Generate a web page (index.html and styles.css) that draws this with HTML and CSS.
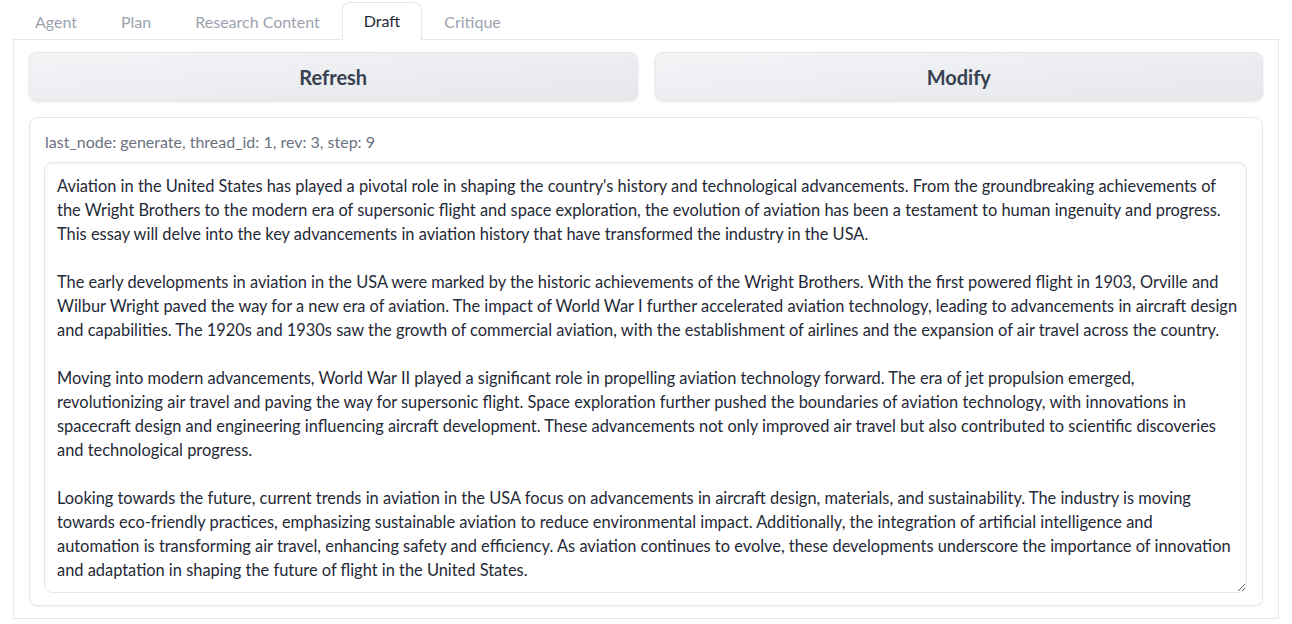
FILE: index.html
```html
<!DOCTYPE html>
<html>
<head>
<meta charset="utf-8">
<link rel="stylesheet" href="styles.css">
</head>
<body>
<div class="tabs">
  <div class="tab-bar">
    <button class="tab">Agent</button>
    <button class="tab">Plan</button>
    <button class="tab">Research Content</button>
    <button class="tab selected">Draft</button>
    <button class="tab">Critique</button>
  </div>
  <div class="panel">
    <div class="actions">
      <button class="btn">Refresh</button>
      <button class="btn">Modify</button>
    </div>
    <div class="block">
      <label class="label">last_node: generate, thread_id: 1, rev: 3, step: 9</label>
      <textarea class="draft" wrap="off">Aviation in the United States has played a pivotal role in shaping the country's history and technological advancements. From the groundbreaking achievements of
the Wright Brothers to the modern era of supersonic flight and space exploration, the evolution of aviation has been a testament to human ingenuity and progress.
This essay will delve into the key advancements in aviation history that have transformed the industry in the USA.

The early developments in aviation in the USA were marked by the historic achievements of the Wright Brothers. With the first powered flight in 1903, Orville and
Wilbur Wright paved the way for a new era of aviation. The impact of World War I further accelerated aviation technology, leading to advancements in aircraft design
and capabilities. The 1920s and 1930s saw the growth of commercial aviation, with the establishment of airlines and the expansion of air travel across the country.

Moving into modern advancements, World War II played a significant role in propelling aviation technology forward. The era of jet propulsion emerged,
revolutionizing air travel and paving the way for supersonic flight. Space exploration further pushed the boundaries of aviation technology, with innovations in
spacecraft design and engineering influencing aircraft development. These advancements not only improved air travel but also contributed to scientific discoveries
and technological progress.

Looking towards the future, current trends in aviation in the USA focus on advancements in aircraft design, materials, and sustainability. The industry is moving
towards eco-friendly practices, emphasizing sustainable aviation to reduce environmental impact. Additionally, the integration of artificial intelligence and
automation is transforming air travel, enhancing safety and efficiency. As aviation continues to evolve, these developments underscore the importance of innovation
and adaptation in shaping the future of flight in the United States.</textarea>
    </div>
  </div>
</div>
</body>
</html>
```

FILE: styles.css
```css
html, body {
  margin: 0;
  padding: 0;
  background: #ffffff;
}

body {
  font-family: Lato, "Noto Sans", sans-serif;
  color: #1f2937;
  padding: 0 13px;
}

.tabs {
  display: flex;
  flex-direction: column;
}

.tab-bar {
  display: flex;
  align-items: flex-end;
  height: 40px;
  border-bottom: 1px solid #e5e7eb;
  box-sizing: border-box;
}

.tab {
  font-family: inherit;
  font-size: 16px;
  color: #9ca3af;
  background: transparent;
  border: 1px solid transparent;
  border-bottom: none;
  border-radius: 8px 8px 0 0;
  padding: 0 21px 2px;
  height: 37px;
  margin-bottom: -1px;
  cursor: pointer;
}

.tab.selected {
  color: #1f2937;
  background: #ffffff;
  border-color: #e5e7eb;
  height: 38px;
}

.panel {
  border: 1px solid #e5e7eb;
  border-top: none;
  padding: 12px 15px 12px;
  display: flex;
  flex-direction: column;
  gap: 16px;
}

.actions {
  display: flex;
  gap: 17px;
}

.btn {
  flex: 1;
  height: 49px;
  font-family: inherit;
  font-size: 20px;
  font-weight: 700;
  color: #374151;
  background: linear-gradient(to bottom right, #f3f4f6, #e5e7eb);
  border: 1px solid #e5e7eb;
  border-radius: 8px;
  box-shadow: 0 1px 3px rgba(0, 0, 0, 0.1);
  cursor: pointer;
}

.block {
  border: 1px solid #e5e7eb;
  border-radius: 8px;
  box-shadow: 0 1px 2px rgba(0, 0, 0, 0.05);
  padding: 14px 15px 12px 14px;
  display: flex;
  flex-direction: column;
  gap: 10px;
}

.label {
  font-size: 16px;
  color: #6b7280;
  line-height: 20px;
  padding-left: 1px;
}

.draft {
  font-family: inherit;
  font-size: 16.4px;
  line-height: 24px;
  color: #1f2937;
  height: 431px;
  box-sizing: border-box;
  padding: 11px 12px;
  border: 1px solid #e5e7eb;
  border-radius: 8px;
  box-shadow: inset 0 1px 2px rgba(0, 0, 0, 0.05);
  white-space: pre;
  overflow: hidden;
  resize: vertical;
  outline: none;
}
```
